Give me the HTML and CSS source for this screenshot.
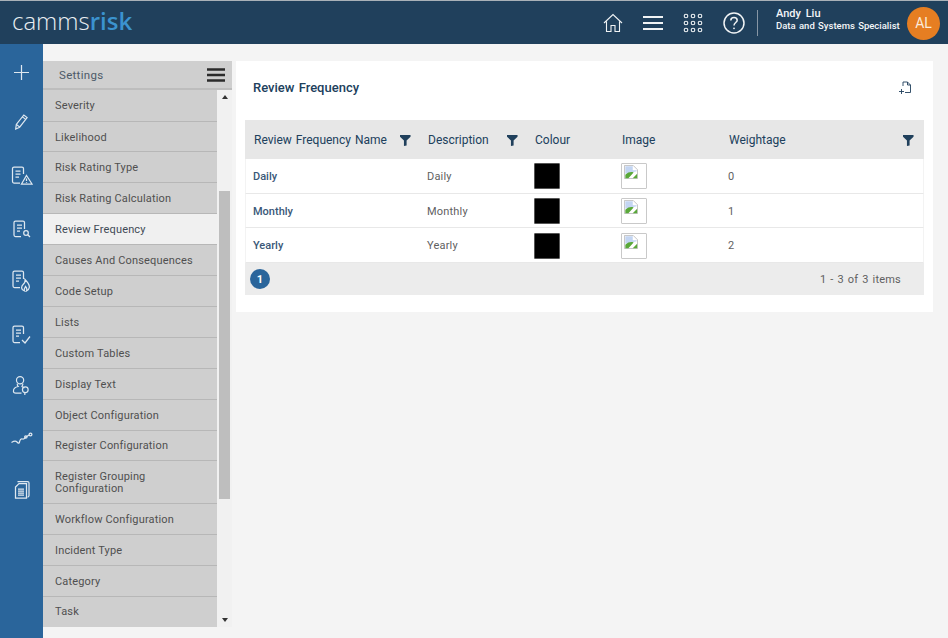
FILE: index.html
```html
<!DOCTYPE html>
<html lang="en">
<head>
<meta charset="utf-8">
<title>Review Frequency</title>
<link rel="stylesheet" href="styles.css">
</head>
<body>
<header class="topbar">
  <div class="logo"><span class="logo-a">camms</span><span class="logo-b">risk</span></div>
  <div class="top-actions">
    <svg class="ti ti-home" viewBox="0 0 20 20"><path d="M1 10 10 1.500 19 10M3.500 8.500V18.500H8V12.500H12V18.500H16.500V8.500"/></svg>
    <svg class="ti ti-menu" viewBox="0 0 20 16"><path d="M0 2H20M0 8H20M0 14H20"/></svg>
    <svg class="ti ti-apps" viewBox="0 0 20 20"><circle cx="3" cy="3" r="1.800"/><circle cx="10" cy="3" r="1.800"/><circle cx="17" cy="3" r="1.800"/><circle cx="3" cy="10" r="1.800"/><circle cx="10" cy="10" r="1.800"/><circle cx="17" cy="10" r="1.800"/><circle cx="3" cy="17" r="1.800"/><circle cx="10" cy="17" r="1.800"/><circle cx="17" cy="17" r="1.800"/></svg>
    <svg class="ti ti-help" viewBox="0 0 22 22"><circle cx="11" cy="11" r="10"/><path d="M7.800 8.400C7.800 6.500 9.300 5.400 11 5.400S14.200 6.500 14.200 8.200C14.200 10.400 11 10.600 11 13.400"/><circle class="dot" cx="11" cy="16.300" r="0.900"/></svg>
    <div class="divider"></div>
    <div class="user">
      <div class="user-name">Andy Liu</div>
      <div class="user-role">Data and Systems Specialist</div>
    </div>
    <div class="avatar">AL</div>
  </div>
</header>
<div class="body-row">
  <nav class="rail">
    <svg class="ri ri-plus" viewBox="0 0 16 16"><path d="M8 0V16M0 8H16"/></svg>
    <svg class="ri ri-pen" viewBox="0 0 16 18"><path d="M2.500 11.500 10.500 1.500 14 4.200 6 14.500 1.800 16.500ZM9 3.500 12.500 6.200M3 12 5.800 14.200"/></svg>
    <svg class="ri ri-d1" viewBox="0 0 22 19"><path d="M9 17H3Q1.500 17 1.500 15.500V2.500Q1.500 1 3 1H11Q12.500 1 12.500 2.500V8M4.500 5H9.500M4.500 8H9.500M4.500 11H8"/><path d="M15.500 9.500 21 18H10.500Z"/><path d="M15.500 12.500V15M15.500 16V16.800"/></svg>
    <svg class="ri ri-d2" viewBox="0 0 22 18"><path d="M10 16.500H4.500Q3 16.500 3 15V2.500Q3 1 4.500 1H12Q13.500 1 13.500 2.500V9M6 5H11M6 8H11M6 11H9"/><circle cx="15" cy="13" r="2.300"/><path d="M16.700 14.700 19 17"/></svg>
    <svg class="ri ri-d3" viewBox="0 0 22 22"><path d="M9 17.500H3.500Q2 17.500 2 16V2.500Q2 1 3.500 1H11Q12.500 1 12.500 2.500V9M5 5H10M5 8H10M5 11H8"/><path d="M13.500 21C10 20 9.800 16.500 12.500 14C13.800 12.800 14.300 11.500 14 9.500C16.500 12 18.800 14.500 18.300 17.500C18 19.500 16.500 20.500 15.500 21C16.300 19 15.500 17.500 14.500 16.500C14 18 12.500 19 13.500 21Z"/></svg>
    <svg class="ri ri-d4" viewBox="0 0 22 20"><path d="M9 17.500H3.500Q2 17.500 2 16V2.500Q2 1 3.500 1H11Q12.500 1 12.500 2.500V9M5 5H10M5 8H10M5 11H8"/><path d="M11 15 14 18 19 11.500"/></svg>
    <svg class="ri ri-person" viewBox="0 0 20 22"><circle cx="8.500" cy="5" r="3.800"/><path d="M5.500 8.500C5.500 10 6 11 6.500 11.500C3.500 12 1.500 13.500 1.500 16.500C1.500 18 2.500 18.500 4 18.500H10M11.500 8.500C11.500 9.500 11 10.500 10.500 11.500L13 13"/><circle cx="14" cy="15" r="3"/><path d="M13.500 18V20.500"/></svg>
    <svg class="ri ri-trend" viewBox="0 0 22 13"><path d="M.5 10.500C3 9 4.500 8.500 6 10C7 11 8 12 8.500 10C9 7.500 10 6.500 11.500 7C13 7.500 14 6.500 15 5L18 3"/><circle cx="14.800" cy="5" r="1.200"/><circle cx="19.500" cy="2.500" r="1.400"/></svg>
    <svg class="ri ri-docs" viewBox="0 0 16 19"><path d="M3.500 1.500H13.500Q15 1.500 15 3V15.500Q15 17 13.500 17"/><path d="M5 3.500H12.500V18H1.500V7Z"/><path d="M4 9H10M4 11H10M4 13H10M4 15H10"/></svg>
  </nav>
  <aside class="panel">
    <div class="panel-head">
      <span class="panel-title">Settings</span>
      <svg class="panel-menu" viewBox="0 0 18 14"><path d="M0 1.500H18M0 7H18M0 12.500H18"/></svg>
    </div>
    <div class="panel-body">
      <ul class="menu">
        <li class="menu-item">Severity</li>
        <li class="menu-item">Likelihood</li>
        <li class="menu-item">Risk Rating Type</li>
        <li class="menu-item">Risk Rating Calculation</li>
        <li class="menu-item active">Review Frequency</li>
        <li class="menu-item">Causes And Consequences</li>
        <li class="menu-item">Code Setup</li>
        <li class="menu-item">Lists</li>
        <li class="menu-item">Custom Tables</li>
        <li class="menu-item">Display Text</li>
        <li class="menu-item">Object Configuration</li>
        <li class="menu-item">Register Configuration</li>
        <li class="menu-item two">Register Grouping Configuration</li>
        <li class="menu-item">Workflow Configuration</li>
        <li class="menu-item">Incident Type</li>
        <li class="menu-item">Category</li>
        <li class="menu-item">Task</li>
      </ul>
      <div class="scrollbar">
        <span class="arrow up"></span>
        <div class="track"><div class="thumb"></div></div>
        <span class="arrow down"></span>
      </div>
    </div>
  </aside>
  <main class="card">
    <div class="card-head">
      <h1 class="card-title">Review Frequency</h1>
      <svg class="export" viewBox="0 0 13 13"><path d="M4 5V1H8.500L11.500 4V11.500H6M8.500 1V4H11.500M0 10.500H5M2.500 8V13"/></svg>
    </div>
    <div class="grid">
      <div class="row head">
        <div class="cell">Review Frequency Name<svg class="filter" viewBox="0 0 12 12"><path d="M0 0H11.500V1.800L7.200 6V11.500L4.300 12V6L0 1.800Z"/></svg></div>
        <div class="cell">Description<svg class="filter" viewBox="0 0 12 12"><path d="M0 0H11.500V1.800L7.200 6V11.500L4.300 12V6L0 1.800Z"/></svg></div>
        <div class="cell">Colour</div>
        <div class="cell">Image</div>
        <div class="cell">Weightage<svg class="filter" viewBox="0 0 12 12"><path d="M0 0H11.500V1.800L7.200 6V11.500L4.300 12V6L0 1.800Z"/></svg></div>
      </div>
      <div class="row">
        <div class="cell name">Daily</div><div class="cell">Daily</div>
        <div class="cell"><span class="swatch"></span></div>
        <div class="cell"><span class="thumbbox"><svg class="broken" viewBox="0 0 16 16"><path class="b-page" d="M.5.5H10.500L15.500 5.500V15.500H.5Z"/><path class="b-sky" d="M1.500 1.500H10V6H14.500V7L1.500 10Z"/><path class="b-grass" d="M1.500 15V11C5 8 8 7.500 11 8.500L5 15ZM10 15 15 10V15Z"/></svg></span></div>
        <div class="cell">0</div>
      </div>
      <div class="row">
        <div class="cell name">Monthly</div><div class="cell">Monthly</div>
        <div class="cell"><span class="swatch"></span></div>
        <div class="cell"><span class="thumbbox"><svg class="broken" viewBox="0 0 16 16"><path class="b-page" d="M.5.5H10.500L15.500 5.500V15.500H.5Z"/><path class="b-sky" d="M1.500 1.500H10V6H14.500V7L1.500 10Z"/><path class="b-grass" d="M1.500 15V11C5 8 8 7.500 11 8.500L5 15ZM10 15 15 10V15Z"/></svg></span></div>
        <div class="cell">1</div>
      </div>
      <div class="row">
        <div class="cell name">Yearly</div><div class="cell">Yearly</div>
        <div class="cell"><span class="swatch"></span></div>
        <div class="cell"><span class="thumbbox"><svg class="broken" viewBox="0 0 16 16"><path class="b-page" d="M.5.5H10.500L15.500 5.500V15.500H.5Z"/><path class="b-sky" d="M1.500 1.500H10V6H14.500V7L1.500 10Z"/><path class="b-grass" d="M1.500 15V11C5 8 8 7.500 11 8.500L5 15ZM10 15 15 10V15Z"/></svg></span></div>
        <div class="cell">2</div>
      </div>
      <div class="pager">
        <span class="page-num">1</span>
        <span class="page-info">1 - 3 of 3 items</span>
      </div>
    </div>
  </main>
</div>
</body>
</html>
```
FILE: styles.css
```css
* { box-sizing: border-box; }
html, body { height: 100%; }
body {
  margin: 0;
  height: 638px;
  overflow: hidden;
  background: #f4f4f4;
  font-family: Roboto, "Liberation Sans", sans-serif;
  display: flex;
  flex-direction: column;
}
.topbar {
  height: 44px;
  flex: none;
  background: #20405c;
  border-top: 1px solid #a9b1b8;
  display: flex;
  align-items: center;
  justify-content: space-between;
  padding: 0 8px 0 12px;
}
.logo { font-family: "Open Sans", sans-serif; font-size: 24px; line-height: 1; margin-top: -3px; }
.logo-a { color: #e9eef2; font-weight: 300; }
.logo-b { color: #3b93cf; font-weight: 600; }
.top-actions { display: flex; align-items: center; }
.ti { fill: none; stroke: #f0f3f5; display: block; }
.ti-home { width: 20px; height: 20px; stroke-width: 1.100; margin-right: 20px; }
.ti-menu { width: 20px; height: 16px; stroke-width: 2; margin-right: 20px; }
.ti-apps { width: 20px; height: 20px; stroke-width: 1.100; margin-right: 20px; }
.ti-help { width: 22px; height: 22px; stroke-width: 1.500; margin-right: 12px; }
.ti-help .dot { fill: #f0f3f5; stroke: none; }
.divider { width: 1px; height: 26px; background: #8796a5; margin-right: 18px; }
.user { color: #f4f6f8; width: 131px; margin-top: -6px; }
.user-name { font-size: 11px; font-weight: 500; line-height: 12px; word-spacing: 2px; }
.user-role { font-size: 9.500px; font-weight: 500; line-height: 11px; word-spacing: 1px; white-space: nowrap; }
.avatar {
  width: 33px; height: 33px; border-radius: 50%; margin-top: 1px;
  background: #e67e22; color: #fbeadb; font-size: 14px;
  display: flex; align-items: center; justify-content: center;
}
.body-row { flex: 1; min-height: 0; display: flex; align-items: flex-start; }
.rail {
  width: 43px; height: 594px; flex: none;
  background: #2a659b;
  display: flex; flex-direction: column; align-items: center;
  padding-top: 21px;
}
.ri { fill: none; stroke: #dfe8f0; stroke-width: 1.250; display: block; flex: none; }
.ri-plus { width: 15px; height: 15px; stroke-width: 1.300; margin-bottom: 33px; }
.ri-pen { width: 15px; height: 18px; margin-bottom: 35px; }
.ri-d1 { width: 22px; height: 19px; margin-bottom: 35px; }
.ri-d2 { width: 22px; height: 18px; margin-bottom: 32px; }
.ri-d3 { width: 22px; height: 22px; margin-bottom: 33px; }
.ri-d4 { width: 22px; height: 20px; margin-bottom: 30px; }
.ri-person { width: 19px; height: 22px; margin-bottom: 35px; }
.ri-trend { width: 22px; height: 13px; margin-bottom: 35px; }
.ri-docs { width: 16px; height: 19px; }
.panel { width: 189px; height: 566px; margin-top: 17px; flex: none; background: #f1f1f1; display: flex; flex-direction: column; overflow: hidden; }
.panel-head {
  height: 29px; flex: none;
  background: #cfcfcf;
  border-bottom: 2px solid #bdbdbd;
  display: flex; align-items: center; justify-content: space-between;
  padding: 0 7px 0 16px;
}
.panel-title { color: #4d5a68; font-size: 11.500px; letter-spacing: .3px; }
.panel-menu { width: 18px; height: 14px; fill: none; stroke: #2b2b2b; stroke-width: 2.500; display: block; }
.panel-body { flex: 1; min-height: 0; display: flex; }
.menu { list-style: none; margin: 0; padding: 0; width: 174px; flex: none; }
.menu-item {
  height: 30.900px;
  background: #cfcfcf;
  border-bottom: 1px solid #b7b7b7;
  color: #4f4f4f;
  font-size: 11px;
  letter-spacing: .17px;
  padding: 1px 10px 0 12px;
  display: flex;
  align-items: center;
}
.menu-item:first-child { height: 31.600px; padding-top: 0; }
.menu-item:last-child { height: 30.100px; border-bottom: 0; padding-top: 0; }
.menu-item.active { background: #f0f0f0; color: #3f4a55; }
.menu-item.two { height: 42.500px; line-height: 12px; padding-right: 50px; }
.scrollbar { flex: 1; display: flex; flex-direction: column; align-items: center; padding-top: 5px; padding-bottom: 5px; }
.arrow { width: 0; height: 0; border-left: 3.500px solid transparent; border-right: 3.500px solid transparent; flex: none; }
.arrow.up { border-bottom: 4px solid #333; }
.arrow.down { border-top: 4px solid #333; }
.track { flex: 1; width: 100%; padding: 92px 2px 0; }
.thumb { height: 308px; background: #bebebe; }
.card { flex: none; width: 697px; height: 251px; margin: 17px 0 0 4px; background: #fff; padding: 0 9px; }
.card-head { height: 59px; display: flex; align-items: center; justify-content: space-between; padding: 0 12px 6px 8px; }
.card-title { margin: 0; color: #20405c; font-size: 13px; font-weight: 500; word-spacing: 1px; }
.export { width: 13px; height: 13px; fill: none; stroke: #20405c; stroke-width: .9; display: block; }
.grid { width: 679px; }
.row {
  display: grid;
  grid-template-columns: 174px 107px 87px 107px 202px;
  height: 34.700px;
  border-bottom: 1px solid #e8e8e8;
  border-right: 1px solid #f3f3f3;
  border-left: 1px solid #f3f3f3;
  color: #5f5f5f;
  font-size: 11px;
  letter-spacing: .2px;
}
.cell { display: flex; align-items: center; justify-content: space-between; padding: 1px 9px 0 7px; }
.row.head { height: 39px; background: #e7e7e7; border-color: transparent; border-bottom: 0; color: #20405c; font-size: 12px; word-spacing: 1px; letter-spacing: 0; }
.row.head .cell { padding: 0 9px 0 8px; }
.cell.name { color: #3a5878; font-weight: 500; letter-spacing: 0; }
.filter { width: 11px; height: 11px; fill: #20405c; display: block; flex: none; margin-top: 1px; }
.swatch { width: 26px; height: 26px; background: #000; border: 1px solid #555; border-radius: 1px; display: block; }
.thumbbox { width: 26px; height: 26px; background: #fff; border: 1px solid #c9c9c9; border-radius: 1px; display: block; padding: 1px 2px; }
.broken { width: 14px; height: 14px; display: block; }
.b-page { fill: #fff; stroke: #bbb; stroke-width: 1; }
.b-sky { fill: #c3d5f2; }
.b-grass { fill: #5aa83a; }
.pager { height: 32px; background: #ececec; display: flex; align-items: center; justify-content: space-between; padding: 0 23px 0 5px; }
.page-num {
  width: 20px; height: 20px; border-radius: 50%; background: #2a659b; color: #fff;
  font-size: 11px; font-weight: 700;
  display: flex; align-items: center; justify-content: center;
}
.page-info { color: #5f5f5f; font-size: 11px; letter-spacing: .2px; word-spacing: 1px; }
```
